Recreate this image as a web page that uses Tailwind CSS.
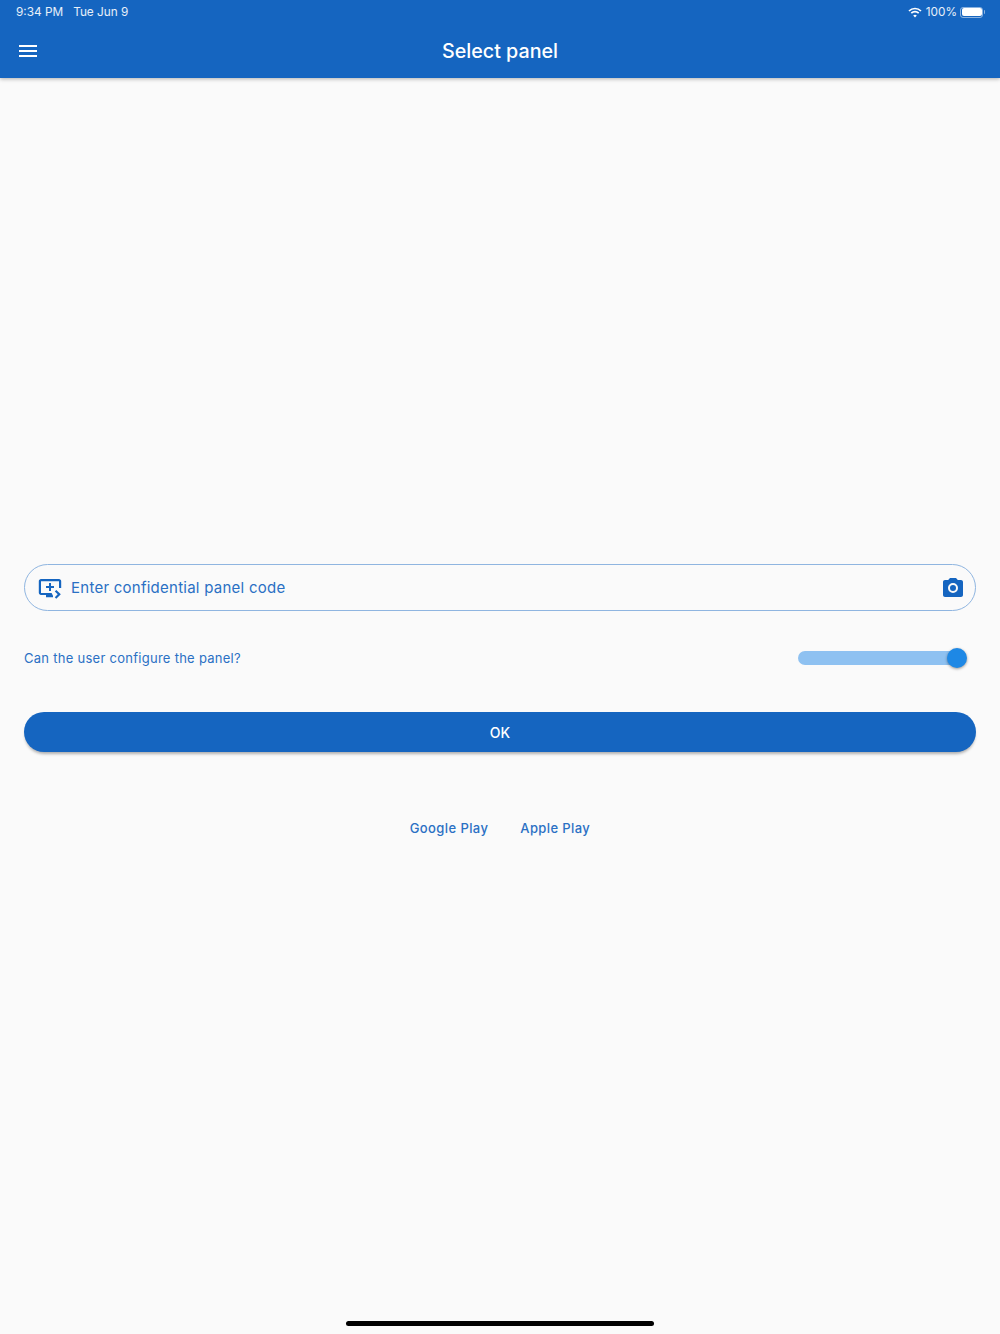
<!DOCTYPE html>
<html><head><meta charset="utf-8"><script src="https://cdn.jsdelivr.net/npm/@tailwindcss/browser@4"></script></head>
<body class="m-0">
<div class="relative w-[1000px] h-[1334px] overflow-hidden bg-[#fafafa] font-['Inter','Liberation_Sans',sans-serif] flex flex-col">
  <header class="h-[78px] bg-[#1565c0] shadow-[0_1px_4px_rgba(0,0,0,0.3)] flex flex-col text-white shrink-0">
    <div class="h-[24px] flex items-center justify-between pl-[16px] pr-[15px] text-[11.8px] text-white/90">
      <div class="flex gap-[10px] pt-[2px]"><span>9:34 PM</span><span>Tue Jun 9</span></div>
      <div class="flex items-center">
        <svg class="mr-[4px]" width="14" height="11" viewBox="0 0 14 11" fill="none" stroke="white" stroke-width="1.7"><path d="M1 4 A8.5 8.5 0 0 1 13 4"/><path d="M3.3 6.2 A5.2 5.2 0 0 1 10.7 6.2"/><path d="M7 10.5 L5.2 8.5 A2.6 2.6 0 0 1 8.8 8.5 Z" fill="white" stroke="none"/></svg>
        <span class="mr-[3px] pt-[2px]">100%</span>
        <div class="flex items-center gap-[1px]">
          <div class="w-[23px] h-[11px] rounded-[3px] border border-white/50 p-[0.5px]"><div class="w-full h-full rounded-[2px] bg-white"></div></div>
          <div class="w-[1px] h-[4px] bg-white/50 rounded-r"></div>
        </div>
      </div>
    </div>
    <div class="relative flex-1 flex items-center justify-center">
      <svg class="absolute left-[15.5px] top-[15px]" width="24" height="24" viewBox="0 0 24 24" fill="white"><path d="M3 18h18v-2H3v2zm0-5h18v-2H3v2zm0-7v2h18V6H3z"/></svg>
      <h1 class="text-[19.7px] font-medium leading-none pt-[2px]">Select panel</h1>
    </div>
  </header>
  <main class="px-[24px] pt-[486px] flex flex-col text-[#1565c0]">
    <div class="h-[47px] rounded-full border border-[#8fb5e0] flex items-center pl-[13px] pr-[10px]">
      <svg width="24" height="24" viewBox="0 0 24 24" fill="#1565c0"><path d="M21 3H3c-1.2 0-2.2 1-2.2 2.2v11.6C.8 18 1.800 19 3 19h5v2.200h7v-1.400L13.600 16.900H3V5.200h18V12h2.200V5.200C23.200 4 22.200 3 21 3z"/><path d="M11 7h2v3h3v2h-3v3h-2v-3H8v-2h3z"/><path d="M16.800 15.400 18.300 13.900l4.500 4.400-4.500 4.400-1.500-1.500 2.900-2.900z"/></svg>
      <span class="ml-[9px] pt-[2px] text-[15px] tracking-[0.25px] flex-1 text-[#2a70c4]">Enter confidential panel code</span>
      <svg width="24" height="24" viewBox="0 0 24 24" fill="#1565c0"><path fill-rule="evenodd" d="M9 2 7.2 4H4c-1.1 0-2 .9-2 2v13c0 1.1.9 2 2 2h16c1.1 0 2-.9 2-2V6c0-1.1-.9-2-2-2h-3.2L15 2H9zm3 15a5 5 0 1 0 0-10 5 5 0 0 0 0 10zm0-2a3 3 0 1 1 0-6 3 3 0 0 1 0 6z"/></svg>
    </div>
    <div class="h-[40px] mt-[27px] flex items-center justify-between">
      <span class="text-[13px] tracking-[0.27px] text-[#2a70c4] pt-[2px]">Can the user configure the panel?</span>
      <div class="relative w-[168px] h-[14px] mr-[10px] rounded-full bg-[#8ec1f1]">
        <div class="absolute right-[-1px] top-[-3px] w-[20px] h-[20px] rounded-full bg-[#1e88e5] shadow-[0_1px_3px_rgba(0,0,0,0.4)]"></div>
      </div>
    </div>
    <button class="h-[40px] mt-[34px] rounded-full bg-[#1565c0] text-white text-[14px] font-medium tracking-[0.1px] shadow-[0_3px_3px_-1px_rgba(0,0,0,0.3)]">OK</button>
    <div class="mt-[66px] h-[20px] flex justify-center gap-[32px] text-[13px] font-medium tracking-[0.4px] text-[#2a70c4] leading-[20px]">
      <span>Google Play</span><span>Apple Play</span>
    </div>
  </main>
  <div class="absolute left-[346px] top-[1321px] w-[308px] h-[5px] rounded-full bg-black"></div>
</div>
</body></html>
